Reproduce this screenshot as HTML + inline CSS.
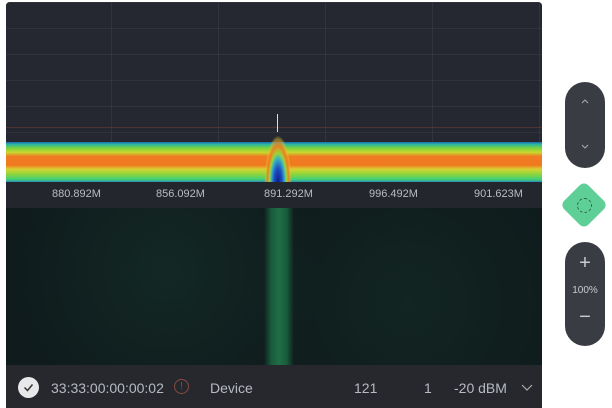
<!DOCTYPE html>
<html><head><style>
body{margin:0;width:612px;height:408px;background:#fff;position:relative;overflow:hidden;font-family:"Liberation Sans",sans-serif}
#p{position:absolute;left:6px;top:2px;width:536px;height:406px;background:#24272e;border-radius:4px 4px 0 0;overflow:hidden}
#spec{position:absolute;left:0;top:0;width:536px;height:178px;background:#252830;
background-image:linear-gradient(90deg,rgba(255,255,255,.05) 1px,transparent 1px),linear-gradient(rgba(255,255,255,.05) 1px,transparent 1px);background-size:107px 100%,100% 26px;background-position:-2px 0,0 0}
#band{position:absolute;left:0;top:140px;width:536px;height:40px;
background:linear-gradient(#1c6bb0 0,#2bb8a0 6%,#7fd43a 16%,#c8d830 26%,#f07b22 36%,#f07a20 58%,#d8d232 68%,#8fd63a 80%,#3ecf7a 94%,#2e8ab8 100%)}
#peak{position:absolute;left:255px;top:122px;width:34px;height:58px;border-radius:50% 50% 0 0;
background:radial-gradient(ellipse 40% 80% at 50% 100%,#0a1d8a 0,#1f4fc0 30%,#39b3c0 50%,#9bd43a 62%,rgba(240,122,32,.9) 78%,rgba(230,192,44,.5) 92%,transparent 100%)}
#lab{position:absolute;left:0;top:180px;width:536px;height:26px;background:#23262d;color:#b9bcc4;font-size:11px}
#lab span{position:absolute;top:6px}
#wf{position:absolute;left:0;top:206px;width:536px;height:157px;background:#0f1b1c;
background-image:radial-gradient(circle at 30% 40%,#132825 0,transparent 40%),radial-gradient(circle at 75% 60%,#122522 0,transparent 40%)}
#col{position:absolute;left:258px;top:206px;width:30px;height:157px;background:linear-gradient(90deg,transparent,#195c3c 25%,#1f6e46 50%,#195c3c 75%,transparent)}
#bar{position:absolute;left:0;top:363px;width:536px;height:45px;background:#26282d;color:#b7bac1;font-size:14px}
#bar span{position:absolute;top:15px}
.pill{position:absolute;left:565px;width:40px;background:#393c42;border-radius:20px;color:#c9cbd0;text-align:center}
</style></head><body>
<div id="p">
<div id="spec"></div>
<div style="position:absolute;left:0;top:125px;width:536px;height:1px;background:#6a3a30;opacity:.6"></div>
<div id="band"></div>
<div id="peak"></div>
<div style="position:absolute;left:271px;top:112px;width:1px;height:18px;background:#ddd"></div>
<div id="lab"><span style="left:46px">880.892M</span><span style="left:150px">856.092M</span><span style="left:258px">891.292M</span><span style="left:363px">996.492M</span><span style="left:468px">901.623M</span></div>
<div id="wf"></div>
<div id="col"></div>
<div id="bar">
<div style="position:absolute;left:12px;top:12px;width:21px;height:21px;border-radius:50%;background:#e8e8ea"></div>
<svg style="position:absolute;left:12px;top:12px" width="21" height="21"><path d="M6.5 10.5l3 3 5-6" fill="none" stroke="#333" stroke-width="1.5"/></svg>
<span style="left:45px">33:33:00:00:00:02</span>
<div style="position:absolute;left:168px;top:14px;width:13px;height:13px;border:1.5px solid #8a4a44;border-radius:50%;color:#8a4a44;font-size:10px;text-align:center;line-height:13px">!</div>
<span style="left:204px">Device</span>
<span style="left:348px">121</span>
<span style="left:418px">1</span>
<span style="left:448px">-20 dBM</span>
<svg style="position:absolute;left:515px;top:19px" width="12" height="8"><path d="M1 1l5 5 5-5" fill="none" stroke="#aaa" stroke-width="1.2"/></svg>
</div>
</div>
<div class="pill" style="top:82px;height:86px"><svg width="40" height="86"><path d="M17 21l3-3 3 3M17 63l3 3 3-3" fill="none" stroke="#aaa" stroke-width="1"/></svg></div>
<div style="position:absolute;left:567px;top:188px;width:34px;height:34px;background:#5fcf98;transform:rotate(45deg);border-radius:6px"></div>
<div style="position:absolute;left:577px;top:198px;width:13px;height:13px;border:1.2px dashed #2c6b4a;border-radius:50%"></div>
<div class="pill" style="top:242px;height:104px"><div style="font-size:20px;margin-top:10px">+</div><div style="font-size:10px;margin-top:10px">100%</div><div style="font-size:20px;margin-top:10px">−</div></div>
</body></html>
